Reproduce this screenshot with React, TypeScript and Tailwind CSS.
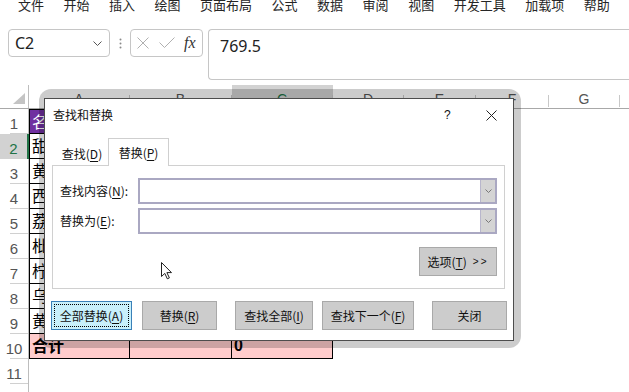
import React from "react";

const menu = ["文件", "开始", "插入", "绘图", "页面布局", "公式", "数据", "审阅", "视图", "开发工具", "加载项", "帮助"];

const cols = [
  { k: "A", w: "w-[101px]" },
  { k: "B", w: "w-[102px]" },
  { k: "C", w: "w-[101px]" },
  { k: "D", w: "w-[71px]" },
  { k: "E", w: "w-[72px]" },
  { k: "F", w: "w-[73px]" },
  { k: "G", w: "w-[71px]" },
];

const names = ["名称", "甜瓜", "黄瓜", "西瓜", "荔枝", "枇杷", "柠檬", "乌梅", "黄桃", "合计"];

function U({ c }: { c: string }) {
  return <span className="underline underline-offset-[2px]">{c}</span>;
}

function Chevron({ cls }: { cls: string }) {
  return (
    <svg width="9" height="5" viewBox="0 0 9 5" className={cls}>
      <path d="M0.5 0.5 L4.5 4.5 L8.5 0.5" fill="none" stroke="currentColor" strokeWidth="1" />
    </svg>
  );
}

function Combo() {
  return (
    <div className="flex h-[26px] flex-1 border-2 border-[#aaa8c2] bg-white">
      <div className="flex-1" />
      <div className="flex w-[15px] items-center justify-center border-l border-[#b8b6cc] bg-[#d4d4d4] text-[#777]">
        <svg width="7" height="4" viewBox="0 0 7 4">
          <path d="M0.5 0.5 L3.5 3.5 L6.5 0.5" fill="none" stroke="currentColor" strokeWidth="1" />
        </svg>
      </div>
    </div>
  );
}

function Btn({ children, w, ml }: { children: React.ReactNode; w: string; ml: string }) {
  return (
    <div className={`flex h-[29px] items-center justify-center border border-[#a9a9a9] bg-[#cccccc] text-[12px] text-[#111] ${w} ${ml}`}>
      {children}
    </div>
  );
}

export default function App() {
  return (
    <div className="relative h-[392px] w-[629px] overflow-hidden bg-white [font-family:'Noto_Sans_CJK_SC',sans-serif]">
      {/* menu bar */}
      <div className="flex h-[29px] items-start gap-[19.5px] pl-[18px] text-[13px] leading-[13px] text-[#262626]">
        {menu.map((m) => (
          <span key={m} className="mt-[-2px] whitespace-nowrap">
            {m}
          </span>
        ))}
      </div>

      {/* formula bar */}
      <div className="flex h-[51px] items-start">
        <div className="ml-[8px] flex h-[28px] w-[102px] items-center justify-between rounded-[4px] border border-[#c6c6c6] pl-[6px] pr-[7px]">
          <span className="text-[16px] leading-[20px] text-[#222] [font-family:'Noto_Sans',sans-serif]">C2</span>
          <Chevron cls="text-[#555]" />
        </div>
        <div className="flex w-[20px] justify-center pt-[9px]">
          <svg width="3" height="11" viewBox="0 0 3 11">
            <circle cx="1.5" cy="1.5" r="1" fill="#8a8a8a" />
            <circle cx="1.5" cy="5.5" r="1" fill="#8a8a8a" />
            <circle cx="1.5" cy="9.5" r="1" fill="#8a8a8a" />
          </svg>
        </div>
        <div className="flex h-[28px] w-[73px] items-center rounded-[4px] border border-[#c6c6c6] pl-[6px]">
          <svg width="12" height="12" viewBox="0 0 12 12">
            <path d="M0.5 0.5 L11.5 11.5 M11.5 0.5 L0.5 11.5" stroke="#b0b0b0" strokeWidth="1" fill="none" />
          </svg>
          <svg width="16" height="12" viewBox="0 0 16 12" className="ml-[10px]">
            <path d="M0.5 5.5 L5.5 10.5 L15.5 0.5" stroke="#b0b0b0" strokeWidth="1" fill="none" />
          </svg>
          <span className="ml-[9px] text-[16px] italic leading-[20px] text-[#333] [font-family:'Liberation_Serif',serif]">fx</span>
        </div>
        <div className="ml-[5px] h-[51px] flex-1 rounded-l-[4px] border border-r-0 border-[#c6c6c6] pl-[11px] pt-[3px]">
          <span className="text-[16px] leading-[20px] text-[#222] [font-family:'Noto_Sans',sans-serif]">769.5</span>
        </div>
      </div>

      {/* sheet */}
      <div className="mt-[5px] [font-family:'Liberation_Sans',sans-serif]">
        {/* column header */}
        <div className="flex h-[24px] border-b border-[#a8a8a8]">
          <div className="relative w-[29px] border-r border-[#bdbdbd]">
            <svg width="12" height="11" viewBox="0 0 12 11" className="absolute left-[13px] top-[8px]">
              <path d="M12 0 L12 11 L0 11 Z" fill="#c4c4c4" />
            </svg>
          </div>
          {cols.map((c) => (
            <div key={c.k} className={`flex ${c.w} ${c.k === "C" ? "bg-[#d2d2d2] text-[#217346]" : "text-[#555]"}`}>
              <div className="flex-1 pt-[7px] text-center text-[14px] leading-[14px]">{c.k}</div>
              <div className="mb-[1px] h-[12px] w-px self-end bg-[#c8c8c8]" />
            </div>
          ))}
          <div className="flex-1" />
        </div>

        {/* rows */}
        {Array.from({ length: 12 }).map((_, i) => {
          const r = i + 1;
          const inTable = r <= 10;
          const sel = r === 2;
          const total = r === 10;
          return (
            <div key={r} className="flex h-[25px]">
              <div
                className={`flex w-[29px] flex-col ${
                  sel ? "border-r-2 border-[#217346] bg-[#d2d2d2] text-[#217346]" : "border-r border-[#bdbdbd] text-[#555]"
                }`}
              >
                <div className="flex-1 pt-[7px] text-center text-[15px] leading-[15px]">{r}</div>
                <div className="ml-[10px] h-px bg-[#d0d0d0]" />
              </div>
              {inTable ? (
                <>
                  <div
                    className={`w-[101px] overflow-hidden whitespace-nowrap border-b border-l border-r border-black pl-[2px] text-[16px] leading-[23px] [font-family:'Noto_Sans_CJK_SC',sans-serif] ${
                      r === 1 ? "border-t bg-[#7030a0] text-white" : total ? "bg-[#ffcccc] font-bold text-black" : "text-black"
                    }`}
                  >
                    {names[i]}
                  </div>
                  <div className={`w-[102px] border-b border-r border-black ${r === 1 ? "border-t bg-[#7030a0]" : total ? "bg-[#ffcccc]" : ""}`} />
                  <div
                    className={`w-[101px] border-b border-r border-black pl-[2px] text-[16px] font-bold leading-[23px] ${
                      r === 1 ? "border-t bg-[#7030a0]" : total ? "bg-[#ffcccc]" : ""
                    }`}
                  >
                    {total ? "0" : ""}
                  </div>
                </>
              ) : null}
              <div className="flex-1" />
            </div>
          );
        })}
      </div>

      {/* dialog shadow */}
      <div className="absolute left-[39px] top-[89px] h-[259px] w-[482px] rounded-[12px] bg-black/20" />

      {/* dialog */}
      <div className="absolute left-[44px] top-[98px] w-[470px] border border-[#4d4d4d] bg-white text-[12px] text-[#111]">
        <div className="flex h-[32px] items-center pl-[8px] pr-[16px]">
          <span>查找和替换</span>
          <span className="ml-auto w-[6px] text-[12px] leading-[12px] [font-family:'Liberation_Sans',sans-serif]">?</span>
          <svg width="11" height="11" viewBox="0 0 11 11" className="ml-[36px]">
            <path d="M0.5 0.5 L10.5 10.5 M10.5 0.5 L0.5 10.5" stroke="#222" strokeWidth="1" fill="none" />
          </svg>
        </div>

        <div className="ml-[7px] mr-[8px]">
          <div className="flex h-[34px] items-end">
            <div className="flex h-[22px] w-[56px] items-center justify-center pl-[4px]">
              查找(<U c="D" />)
            </div>
            <div className="relative z-10 -mb-px flex h-[28px] w-[61px] items-center justify-center border border-b-0 border-[#cfcfcf] bg-white">
              替换(<U c="P" />)
            </div>
          </div>
          <div className="border border-[#d0d0d0] px-[7px] py-[12px]">
            <div className="flex h-[26px] items-center">
              <div className="w-[78px]">
                查找内容(<U c="N" />):
              </div>
              <Combo />
            </div>
            <div className="mt-[4px] flex h-[26px] items-center">
              <div className="w-[78px]">
                替换为(<U c="E" />):
              </div>
              <Combo />
            </div>
            <div className="mt-[13px] flex justify-end">
              <div className="flex h-[29px] w-[78px] items-center justify-center border border-[#a9a9a9] bg-[#cccccc]">
                <span>
                  选项(<U c="T" />)
                </span>
                <span className="ml-[6px] text-[10px] tracking-[2px] [font-family:'Liberation_Sans',sans-serif]">&gt;&gt;</span>
              </div>
            </div>
          </div>
        </div>

        <div className="mb-[10px] mt-[12px] flex h-[29px] pl-[6px]">
          <div className="relative flex h-[29px] w-[81px] items-center justify-center border border-[#3a80b8] bg-[#c8f0fb]">
            <div className="absolute inset-[2px] border border-dotted border-black" />
            全部替换(<U c="A" />)
          </div>
          <Btn w="w-[75px]" ml="ml-[10px]">
            替换(<U c="R" />)
          </Btn>
          <Btn w="w-[78px]" ml="ml-[18px]">
            查找全部(<U c="I" />)
          </Btn>
          <Btn w="w-[92px]" ml="ml-[9px]">
            查找下一个(<U c="F" />)
          </Btn>
          <Btn w="w-[75px]" ml="ml-[18px]">
            关闭
          </Btn>
        </div>
      </div>

      {/* mouse cursor */}
      <svg width="13" height="18" viewBox="0 0 13 18" className="absolute left-[161px] top-[262px]">
        <path d="M0.5 0.5 L0.5 14.5 L3.8 11.4 L6.3 16.8 L8.4 15.9 L5.9 10.6 L10.5 10.6 Z" fill="white" stroke="#222" strokeWidth="1" strokeLinejoin="round" />
      </svg>
    </div>
  );
}
